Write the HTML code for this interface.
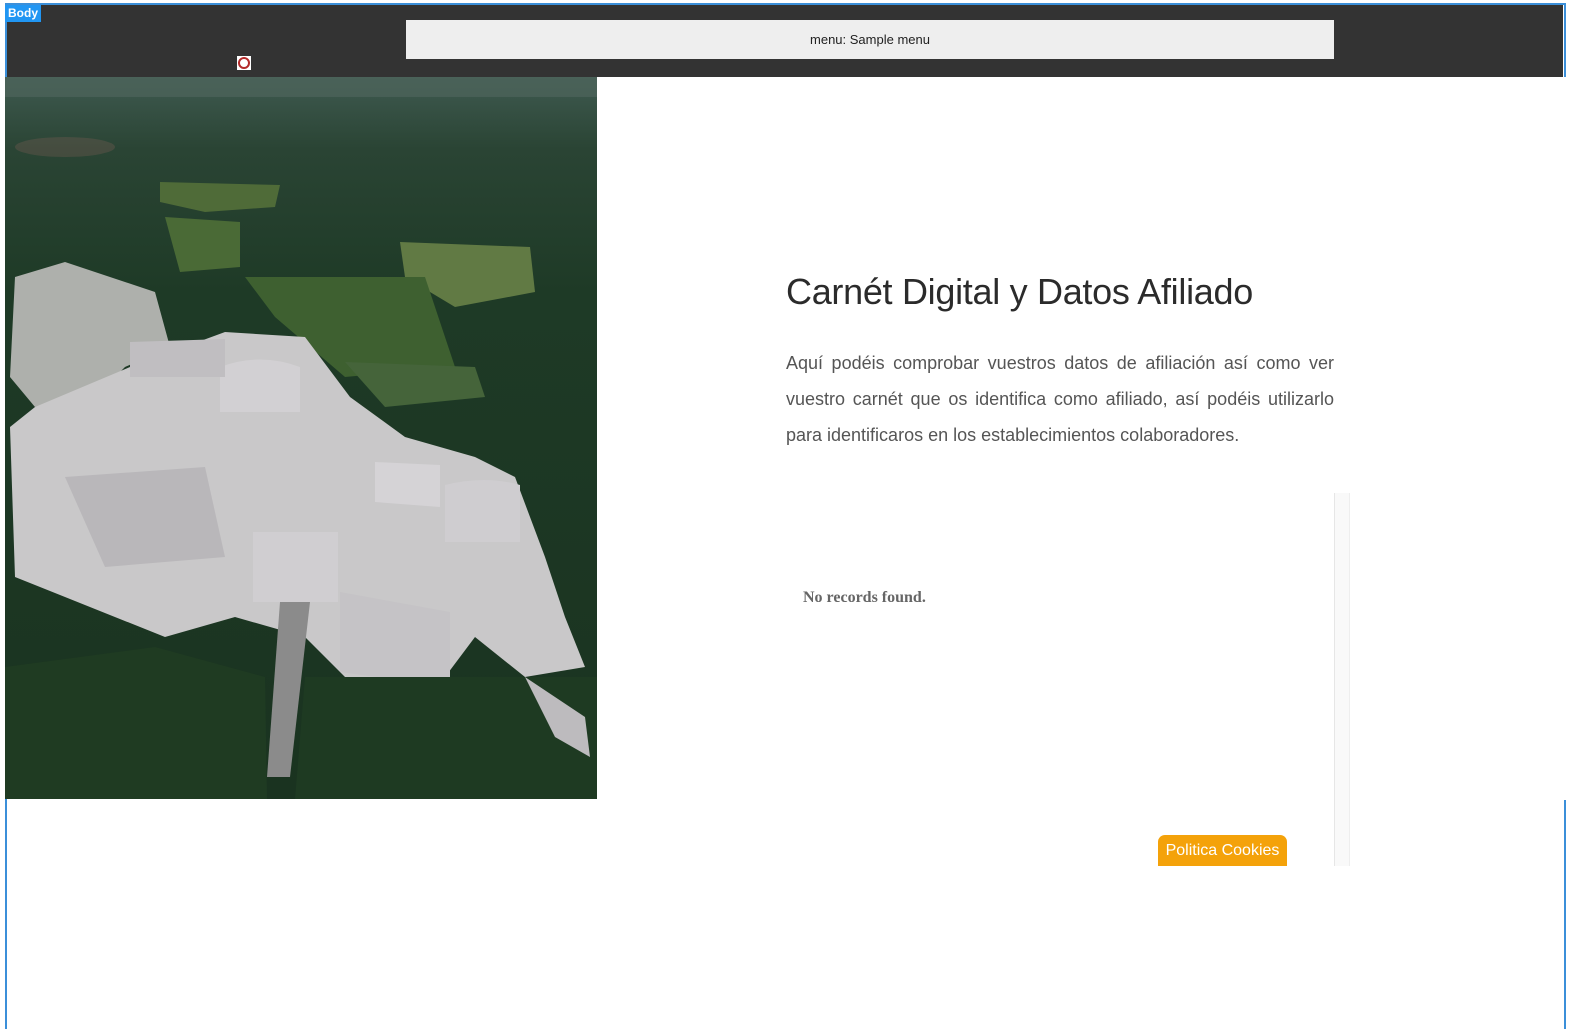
<!DOCTYPE html>
<html><head><meta charset="utf-8"><style>
html,body{margin:0;padding:0;background:#fff;width:1585px;height:1029px;overflow:hidden;}
body{position:relative;font-family:"Liberation Sans",sans-serif;}
.frame{position:absolute;left:5px;top:3px;width:1557px;height:1030px;border:2px solid #3b8fd9;border-bottom:none;}
.hdr{position:absolute;left:7px;top:5px;width:1556px;height:72px;background:#333;}
.tag{position:absolute;left:5px;top:5px;width:36px;height:17px;background:#2196f3;color:#fff;font-size:12px;font-weight:bold;line-height:17px;text-align:center;}
.menu{position:absolute;left:406px;top:20px;width:928px;height:39px;background:#eee;font-size:13px;color:#222;text-align:center;line-height:40px;}
.ico{position:absolute;left:237px;top:56px;width:14px;height:14px;background:#fff;}
.ico div{position:absolute;left:1px;top:1px;width:8px;height:8px;border:2px solid #b32a2a;border-radius:50%;}
.img{position:absolute;left:5px;top:77px;width:592px;height:722px;}
.white{position:absolute;left:597px;top:77px;width:970px;height:723px;background:#fff;}
h1{position:absolute;left:786px;top:271px;margin:0;font-weight:normal;font-size:36px;color:#2b2b2b;letter-spacing:-0.3px;}
p{position:absolute;left:786px;top:345px;width:548px;margin:0;font-size:18px;line-height:36px;color:#555;text-align:justify;}
.nr{position:absolute;left:803px;top:589px;font-family:"Liberation Serif",serif;font-weight:bold;font-size:16px;color:#666;}
.sb{position:absolute;left:1334px;top:493px;width:14px;height:373px;background:#f9f9f9;border-left:1px solid #e6e6e6;border-right:1px solid #eee;}
.btn{position:absolute;left:1158px;top:835px;width:129px;height:31px;background:#f4a20a;border-radius:7px 7px 0 0;color:#fff;font-size:16px;text-align:center;line-height:31px;}
</style></head><body>
<div class="frame"></div>
<div class="hdr"></div>
<div class="tag">Body</div>
<div class="menu">menu: Sample menu</div>
<div class="ico"><div></div></div>
<div class="white"></div>
<svg class="img" viewBox="0 0 592 722" preserveAspectRatio="none">
<defs><linearGradient id="g" x1="0" y1="0" x2="0" y2="1"><stop offset="0" stop-color="#3f5a50"/><stop offset="0.1" stop-color="#2a4434"/><stop offset="0.3" stop-color="#1e3a26"/><stop offset="1" stop-color="#1a3320"/></linearGradient></defs>
<rect width="592" height="722" fill="url(#g)"/>
<rect x="0" y="0" width="592" height="20" fill="#51685f" opacity="0.6"/>
<ellipse cx="60" cy="70" rx="50" ry="10" fill="#6e5a50" opacity="0.4"/>
<path d="M155 105 L275 108 L270 130 L200 135 L155 125Z" fill="#4f6b38"/>
<path d="M160 140 L235 145 L235 190 L175 195Z" fill="#4a6a36"/>
<path d="M395 165 L525 170 L530 215 L450 230 L400 200Z" fill="#617a44"/>
<path d="M240 200 L420 200 L450 290 L340 300 L270 240Z" fill="#3e6030"/>
<path d="M340 285 L470 290 L480 320 L380 330Z" fill="#45643a"/>
<path d="M10 200 L60 185 L150 215 L165 270 L120 290 L90 320 L30 330 L5 300Z" fill="#aeb0ac"/>
<path d="M30 330 L125 290 L220 255 L300 260 L345 320 L400 360 L470 380 L510 400 L540 480 L560 540 L580 590 L520 600 L470 560 L440 600 L340 600 L300 560 L230 540 L160 560 L60 520 L10 500 L5 350Z" fill="#c9c8c9"/>
<path d="M60 400 L200 390 L220 480 L100 490 Z" fill="#b9b7ba"/>
<path d="M215 290 Q255 275 295 290 L295 335 L215 335Z" fill="#d2d0d3"/>
<path d="M125 265 L220 262 L220 300 L125 300Z" fill="#c0bec1"/>
<path d="M440 408 Q480 398 515 408 L515 465 L440 465Z" fill="#cfcdd0"/>
<path d="M370 385 L435 388 L435 430 L370 425Z" fill="#d5d3d6"/>
<path d="M248 455 L333 455 L333 525 L248 525Z" fill="#d0ced1"/>
<path d="M335 515 L445 535 L445 610 L335 595Z" fill="#c5c3c6"/>
<path d="M275 525 L305 525 L285 700 L262 700Z" fill="#8b8b8b"/>
<path d="M165 690 L210 640 L245 660 L240 722 L165 722Z" fill="#c4c2c5"/>
<path d="M0 590 L150 570 L260 600 L262 722 L0 722Z" fill="#1f3b22"/>
<path d="M300 600 L592 600 L592 722 L290 722Z" fill="#1e3a22"/>
<path d="M520 600 L580 640 L585 680 L550 660Z" fill="#bdbbbe"/>
</svg>
<h1>Carnét Digital y Datos Afiliado</h1>
<p>Aquí podéis comprobar vuestros datos de afiliación así como ver vuestro carnét que os identifica como afiliado, así podéis utilizarlo para identificaros en los establecimientos colaboradores.</p>
<div class="sb"></div>
<div class="nr">No records found.</div>
<div class="btn">Politica Cookies</div>
</body></html>
